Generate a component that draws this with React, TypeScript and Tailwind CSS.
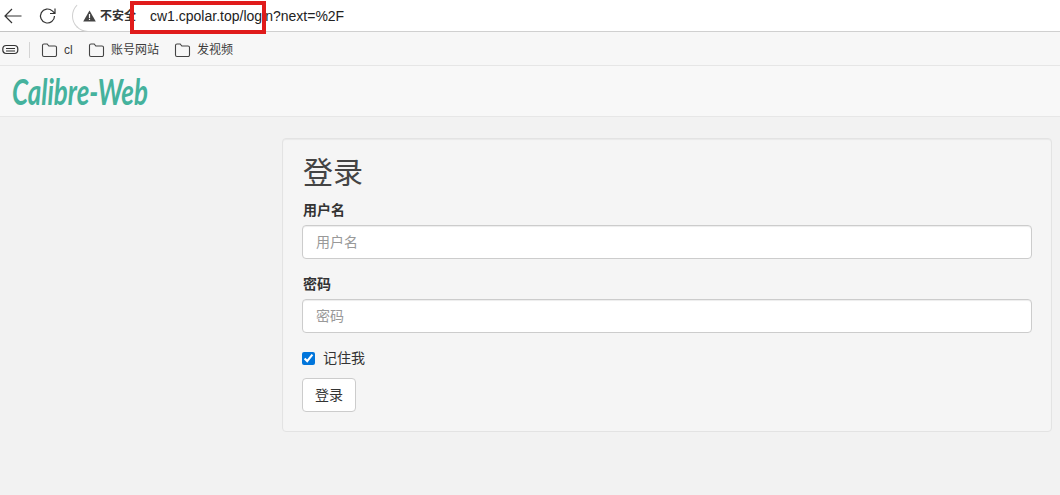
const sans = "font-['Liberation_Sans','Noto_Sans_CJK_SC',sans-serif]";

function Folder() {
  return (
    <svg width="17" height="16" viewBox="0 0 17 16" fill="none" stroke="#444" strokeWidth="1.1" className="shrink-0">
      <path d="M1.5 13V3.5a1.5 1.5 0 0 1 1.5-1.5h3.2l1.6 2h6.2a1.5 1.5 0 0 1 1.5 1.5V13a1.5 1.5 0 0 1-1.5 1.5H3A1.5 1.5 0 0 1 1.5 13z" />
    </svg>
  );
}

function Bookmark({ label, w }: { label: string; w: string }) {
  return (
    <div className={`flex items-center gap-[6px] ${w}`}>
      <Folder />
      <span className="text-[12px] text-[#3c3c3c]">{label}</span>
    </div>
  );
}

function Field({ label, mb }: { label: string; mb: string }) {
  return (
    <div className={mb}>
      <label className="block pl-px text-[14px] font-bold leading-[18px] text-[#333] mb-[6px]">{label}</label>
      <input
        placeholder={label}
        className="block w-full h-[34px] rounded-[4px] border border-[#ccc] bg-white pl-[13px] pr-3 text-[14px] placeholder:text-[#999] shadow-[inset_0_1px_1px_rgba(0,0,0,0.075)]"
      />
    </div>
  );
}

export default function App() {
  return (
    <div className={`${sans} h-[495px] w-[1060px] overflow-hidden bg-[#f2f2f2]`}>
      <div className="relative flex h-[32px] items-center border-b border-[#c4c4c4] bg-white">
        <svg width="18" height="16" viewBox="0 0 18 16" fill="none" stroke="#333" strokeWidth="1.2" className="ml-[4px] shrink-0">
          <path d="M17.5 8H1M8 1 1 8l7 7" />
        </svg>
        <svg width="18" height="18" viewBox="0 0 18 18" fill="none" stroke="#333" strokeWidth="1.2" className="ml-[17px] shrink-0">
          <path d="M15.5 9a7 7 0 1 1-2.2-5.1L16 6.5M16 1.5v5h-5" />
        </svg>
        <div className="ml-[15px] flex h-[32px] flex-1 items-center rounded-tl-[16px] rounded-bl-[16px] border border-r-0 border-[#d0d0d0] border-t-white pl-[10px] pt-[1px]">
          <svg width="13" height="12" viewBox="0 0 13 12" className="shrink-0">
            <path d="M6.5 0.5 12.8 11.5H0.2z" fill="#444" />
            <rect x="5.9" y="4" width="1.2" height="4" fill="#fff" />
            <rect x="5.9" y="8.8" width="1.2" height="1.2" fill="#fff" />
          </svg>
          <span className="ml-[4px] w-[50px] text-[12px] font-bold text-[#333]">不安全</span>
          <span className="text-[14px] text-[#222]">cw1.cpolar.top/login?next=%2F</span>
        </div>
        <div className="absolute left-[130px] top-[1px] h-[33px] w-[136px] border-[4px] border-[#e01b1b]" />
      </div>
      <div className="flex h-[34px] items-center border-b border-[#e6e6e6] bg-[#f7f7f7] pl-[2px] pt-[2px]">
        <svg width="17" height="12" viewBox="0 0 17 12" fill="none" stroke="#333" strokeWidth="1.2" className="shrink-0">
          <rect x="0.8" y="1.5" width="15" height="8" rx="3.5" />
          <path d="M4 4.5h9M4 7h9" />
        </svg>
        <div className="ml-[10px] mr-[11px] h-[16px] w-px bg-[#d4d4d4]" />
        <Bookmark label="cl" w="w-[47px]" />
        <Bookmark label="账号网站" w="w-[86px]" />
        <Bookmark label="发视频" w="w-[70px]" />
      </div>
      <div className="flex h-[51px] items-center border-b border-[#e7e7e7] bg-[#f8f8f8] pl-[12px]">
        <span className="origin-left scale-x-[0.72] whitespace-nowrap font-['Lato',sans-serif] text-[36px] font-bold italic leading-none text-[#45b29d]">Calibre-Web</span>
      </div>
      <div className="pl-[282px] pt-[21px]">
        <div className="h-[294px] w-[770px] rounded-[4px] border border-[#e3e3e3] bg-[#f5f5f5] px-[19px] pt-[17px] shadow-[inset_0_1px_1px_rgba(0,0,0,0.05)]">
          <h2 className="pl-px text-[30px] font-normal leading-[33px] text-[#444] mb-[12px]">登录</h2>
          <Field label="用户名" mb="mb-[16px]" />
          <Field label="密码" mb="mb-[16px]" />
          <label className="flex items-center text-[14px] leading-[18px] text-[#333]">
            <input type="checkbox" defaultChecked className="m-0 h-[13px] w-[13px] accent-[#0075db]" />
            <span className="ml-[8px]">记住我</span>
          </label>
          <button className="mt-[11px] h-[34px] w-[54px] rounded-[4px] border border-[#ccc] bg-white text-[14px] text-[#333]">登录</button>
        </div>
      </div>
    </div>
  );
}
